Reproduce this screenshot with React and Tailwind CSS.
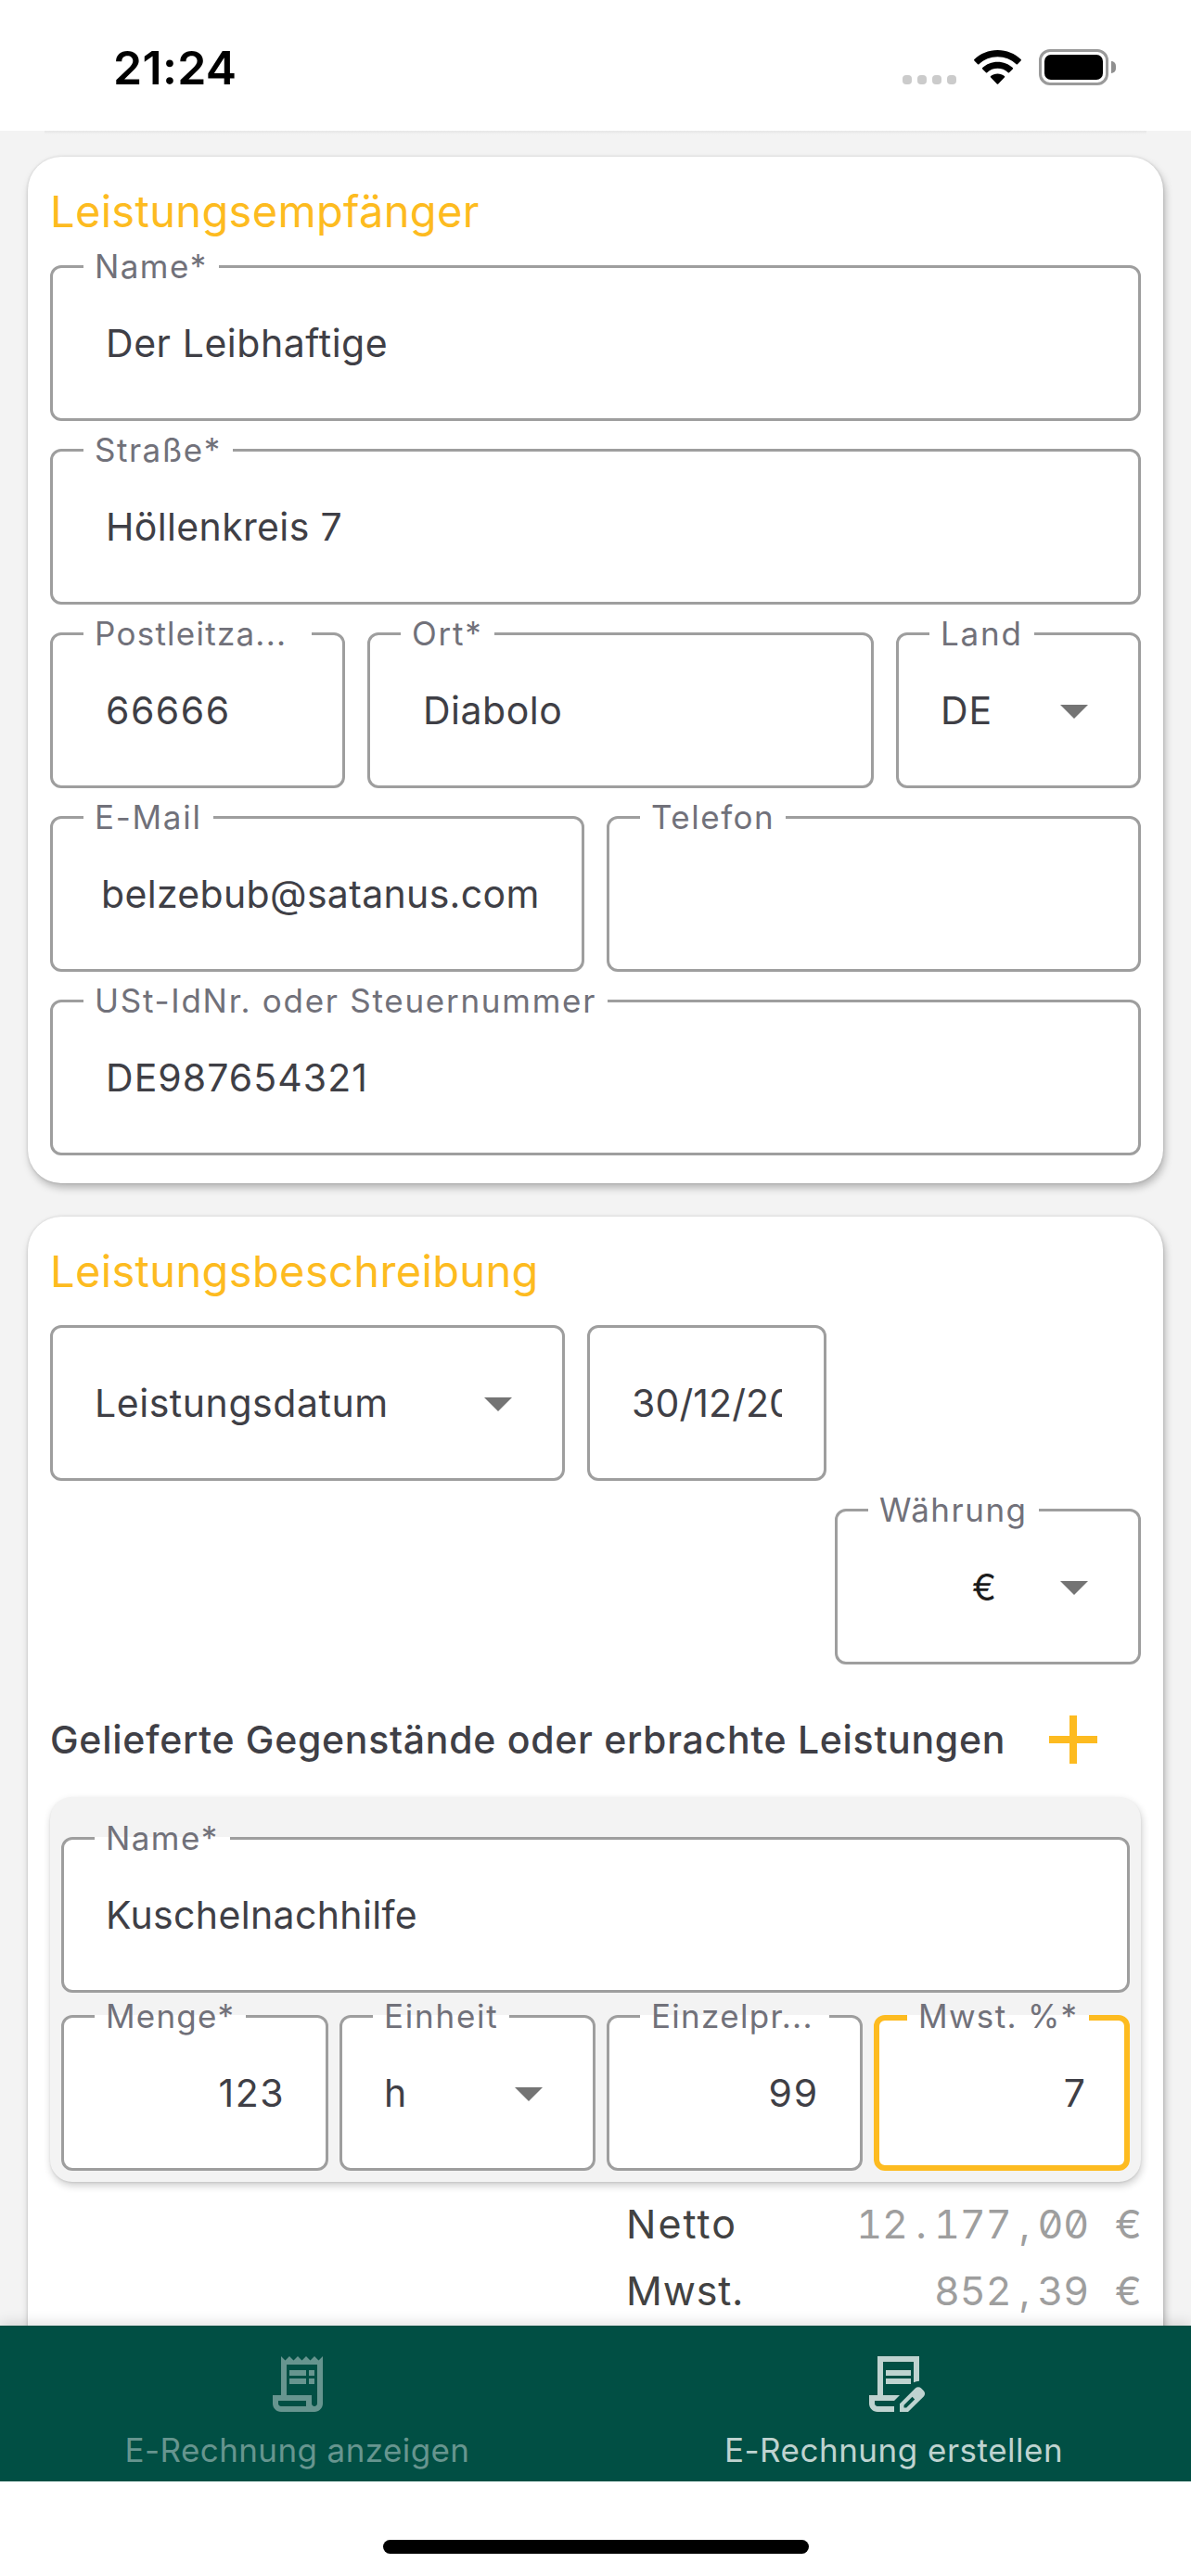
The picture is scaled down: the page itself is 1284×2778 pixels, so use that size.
function Caret() {
  return (
    <svg className="absolute right-[54px] top-[75px] h-[15px] w-[30px]" viewBox="0 0 10 5" fill="#747474">
      <path d="M0 0l5 5 5-5z" />
    </svg>
  );
}

/* Outlined form field whose label interrupts the top border. */
function Field({ label, labelClass = "tracking-[1.6px]", children, className = "", valueClass = "pl-[57px]", select, focused }) {
  return (
    <fieldset
      className={`relative h-[168px] min-w-0 rounded-[12px] bg-white ${
        focused ? "border-[6px] border-[#fdbb20]" : "border-[3px] border-[#9e9e9e]"
      } ${className}`}
    >
      {label && (
        <legend
          className={`whitespace-nowrap pl-[12px] pr-[12px] text-[35px] text-[#71717a] ${
            focused ? "ml-[30px] h-[6px] leading-[3px]" : "ml-[33px] h-[3px] leading-[3px]"
          } ${labelClass}`}
        >
          {label}
        </legend>
      )}
      <div
        className={`whitespace-nowrap text-[41px] text-[#3f3f46] ${
          focused ? "h-[156px] leading-[156px]" : "h-[162px] leading-[162px]"
        } ${valueClass}`}
      >
        {children}
      </div>
      {select && <Caret />}
    </fieldset>
  );
}

function Card({ title, className = "", titleClass, children }) {
  return (
    <section
      className={`mx-[30px] shrink-0 rounded-[36px] bg-white px-6 shadow-[2px_5px_9px_rgba(0,0,0,0.26),0_0_3px_rgba(0,0,0,0.14)] ${className}`}
    >
      <h2 className={`h-[117px] text-[47px] leading-[118px] text-[#fdbb20] ${titleClass}`}>{title}</h2>
      {children}
    </section>
  );
}

/* Amount set in fixed-width cells so that the figures line up. */
function Amount({ value }) {
  return (
    <span className="flex text-[43px] text-[#9e9e9e] [font-feature-settings:'tnum','zero']">
      {[...value].map((c, i) => (
        <span key={i} className="inline-block w-[27.9px] whitespace-pre text-center">
          {c}
        </span>
      ))}
    </span>
  );
}

function TotalRow({ label, labelClass, value }) {
  return (
    <div className="flex h-[72px] items-center justify-between pl-[621px]">
      <span className={`text-[43px] text-[#424242] ${labelClass}`}>{label}</span>
      <Amount value={value} />
    </div>
  );
}

function StatusBar() {
  return (
    <header className="flex h-[141px] shrink-0 items-start justify-between bg-white pl-[122px] pr-[81px]">
      <span className="mt-[43px] text-[50px] font-semibold leading-[61px] tracking-[0.3px] text-black">21:24</span>
      <div className="mt-[53px] flex h-[39px] items-center">
        <div className="mt-[27px] flex gap-[6px]">
          {[0, 1, 2, 3].map((i) => (
            <span key={i} className="h-[10px] w-[10px] rounded-[4px] bg-[#cbcbcb]" />
          ))}
        </div>
        <svg className="ml-[19px] h-[37px] w-[51px]" viewBox="0 0 51 37">
          <path d="M25.500 0C35.300 0 44 3.700 50.600 10.100a.9.9 0 0 1 0 1.300l-3.700 3.800a.9.9 0 0 1-1.300 0C40.200 10.200 33.200 7.300 25.500 7.300S10.800 10.200 5.400 15.200a.9.9 0 0 1-1.300 0L.4 11.400a.9.9 0 0 1 0-1.300C7 3.700 15.700 0 25.500 0z" />
          <path d="M25.500 12.700c6.300 0 12 2.400 16.300 6.400a.9.9 0 0 1 0 1.300L38 24.200a.9.9 0 0 1-1.200 0 16.600 16.600 0 0 0-22.600 0 .9.9 0 0 1-1.200 0l-3.800-3.800a.9.9 0 0 1 0-1.300c4.300-4 10-6.400 16.300-6.400z" />
          <path d="M25.500 25.400c2.800 0 5.400 1 7.400 2.700a.9.9 0 0 1 0 1.300l-6.700 7a.9.9 0 0 1-1.400 0l-6.700-7a.9.9 0 0 1 0-1.300c2-1.700 4.600-2.700 7.400-2.700z" />
        </svg>
        <div className="ml-[19px] h-[39px] w-[75px] rounded-[12px] border-[3px] border-[#9a9a9a] p-[3px]">
          <div className="h-full w-full rounded-[7px] bg-black" />
        </div>
        <span className="ml-[3px] h-[13px] w-[5px] rounded-r-full bg-[#8f8f8f]" />
      </div>
    </header>
  );
}

function ReceiptIcon() {
  return (
    <svg className="h-[72px] w-[72px]" viewBox="0 0 24 24" fill="currentColor">
      <path
        fillRule="evenodd"
        d="M19.500 3.500 18 2l-1.500 1.500L15 2l-1.500 1.500L12 2l-1.500 1.500L9 2 7.500 3.500 6 2v14H3v3c0 1.660 1.340 3 3 3h12c1.660 0 3-1.340 3-3V2zM15 20H6c-.55 0-1-.45-1-1v-1h10zm4-1c0 .55-.45 1-1 1s-1-.45-1-1v-3H8V5h11z"
      />
      <path d="M9 7h6v2H9zM16 7h2v2h-2zM9 10h6v2H9zM16 10h2v2h-2z" />
    </svg>
  );
}

function ContractEditIcon() {
  return (
    <svg className="h-[72px] w-[72px]" viewBox="0 0 24 24" fill="currentColor">
      <path d="M6 2h15v8.900a4 4 0 0 0-2 .5V4H8v12h6l-2 2H5v1c0 .55.45 1 1 1h6v2H6c-1.650 0-3-1.350-3-3v-3h3z" />
      <path d="M9 7h9v2H9zM9 10h9v2H9z" />
      <path
        fillRule="evenodd"
        d="M14 22v-2.900l5.600-5.600a1.500 1.500 0 0 1 2.100 0l.9.900a1.500 1.500 0 0 1 0 2.100L17 22zm1.500-1.500h.9l3-3-.9-.9-3 3z"
      />
    </svg>
  );
}

function Tab({ icon, label, className }) {
  return (
    <div className={`flex flex-1 flex-col items-center pt-[27px] ${className}`}>
      {icon}
      <span className="mt-[14px] text-[35px] leading-[42px]">{label}</span>
    </div>
  );
}

export default function App() {
  return (
    <div className="flex h-[2778px] w-[1284px] flex-col overflow-hidden bg-[#f3f3f3] font-['Inter',sans-serif]">
      <StatusBar />

      <main className="flex h-[2367px] shrink-0 flex-col overflow-hidden">
        <div className="mx-[48px] h-[4px] shrink-0 bg-linear-to-b from-[#e6e6e6] to-[#f3f3f3]" />

        <Card title="Leistungsempfänger" titleClass="tracking-[0.33px]" className="mt-[24px] h-[1107px]">
          <div className="flex flex-col gap-[30px]">
            <Field label="Name*" labelClass="tracking-[1.4px]">
              <span className="tracking-[0.55px]">Der Leibhaftige</span>
            </Field>
            <Field label="Straße*" labelClass="tracking-[1.5px]">
              <span className="tracking-[0.35px]">Höllenkreis 7</span>
            </Field>
            <div className="grid grid-cols-[318px_546px_264px] gap-6">
              <Field label="Postleitza..." labelClass="w-[246px] tracking-[1.25px]">
                <span className="tracking-[1.5px]">66666</span>
              </Field>
              <Field label="Ort*" labelClass="tracking-[1.8px]">
                <span className="tracking-[0.5px]">Diabolo</span>
              </Field>
              <Field label="Land" labelClass="tracking-[1.8px]" valueClass="pl-[45px]" select>
                <span className="tracking-[1px]">DE</span>
              </Field>
            </div>
            <div className="grid grid-cols-2 gap-6">
              <Field label="E-Mail" labelClass="tracking-[1.7px]" valueClass="pl-[52px]">
                <span className="tracking-[0.33px]">belzebub@satanus.com</span>
              </Field>
              <Field label="Telefon" labelClass="tracking-[1.5px]" />
            </div>
            <Field label="USt-IdNr. oder Steuernummer" labelClass="tracking-[1.73px]">
              <span className="tracking-[1.05px]">DE987654321</span>
            </Field>
          </div>
        </Card>

        <Card title="Leistungsbeschreibung" titleClass="tracking-[0.36px]" className="mt-[36px] h-[1400px]">
          <div className="flex gap-6">
            <Field className="w-[555px]" valueClass="pl-[45px]" select>
              <span className="tracking-[0.55px]">Leistungsdatum</span>
            </Field>
            <Field className="w-[258px]" valueClass="mx-[45px] overflow-hidden">
              <span className="tracking-[0.1px]">30/12/2024</span>
            </Field>
          </div>
          <div className="mt-[30px] flex justify-end">
            <Field label="Währung" labelClass="tracking-[1.5px]" className="w-[330px]" valueClass="pr-[153px] text-right" select>
              <span className="text-[39px] text-[#1c1c1c]">€</span>
            </Field>
          </div>

          <div className="mb-px mt-5 flex h-[122px] items-center justify-between pr-[47px]">
            <h3 className="mt-[2px] whitespace-nowrap text-[41px] font-medium tracking-[0.7px] text-[#3f3f46]">
              Gelieferte Gegenstände oder erbrachte Leistungen
            </h3>
            <svg className="h-[52px] w-[52px]" viewBox="0 0 52 52" fill="none" stroke="#fdbb20" strokeWidth="8">
              <path d="M26 0v52M0 26h52" />
            </svg>
          </div>

          <div className="h-[415px] rounded-[24px] bg-[#f3f3f3] px-3 pt-[43px] shadow-[1px_4px_8px_rgba(0,0,0,0.2),0_1px_2px_rgba(0,0,0,0.08)]">
            <Field label="Name*" labelClass="tracking-[1.4px]" valueClass="pl-[45px]">
              <span className="tracking-[0.35px]">Kuschelnachhilfe</span>
            </Field>
            <div className="mt-6 grid grid-cols-[288px_276px_276px_276px] gap-3">
              <Field label="Menge*" labelClass="tracking-[1.2px]" valueClass="pr-[44px] text-right">
                <span className="tracking-[1.5px]">123</span>
              </Field>
              <Field label="Einheit" labelClass="tracking-[1.75px]" valueClass="pl-[45px]" select>
                h
              </Field>
              <Field label="Einzelpr..." labelClass="w-[204px] tracking-[1.3px]" valueClass="pr-[44px] text-right">
                <span className="tracking-[1.8px]">99</span>
              </Field>
              <Field label="Mwst. %*" labelClass="tracking-[1.3px]" valueClass="pr-[42px] text-right" focused>
                7
              </Field>
            </div>
          </div>

          <div className="mt-[9px]">
            <TotalRow label="Netto" labelClass="tracking-[2px]" value="12.177,00 €" />
            <TotalRow label="Mwst." labelClass="tracking-[0.8px]" value="852,39 €" />
          </div>
        </Card>
      </main>

      <nav className="relative flex h-[168px] shrink-0 bg-[#014f44] shadow-[0_-3px_14px_rgba(0,0,0,0.12)]">
        <Tab icon={<ReceiptIcon />} label="E-Rechnung anzeigen" className="tracking-[0.4px] text-[#67958f]" />
        <Tab icon={<ContractEditIcon />} label="E-Rechnung erstellen" className="pl-[2px] tracking-[0.5px] text-[#bfd3d0]" />
      </nav>

      <footer className="relative flex h-[102px] shrink-0 justify-center bg-white pt-[63px]">
        <div className="h-[15px] w-[459px] rounded-full bg-black" />
      </footer>
    </div>
  );
}
